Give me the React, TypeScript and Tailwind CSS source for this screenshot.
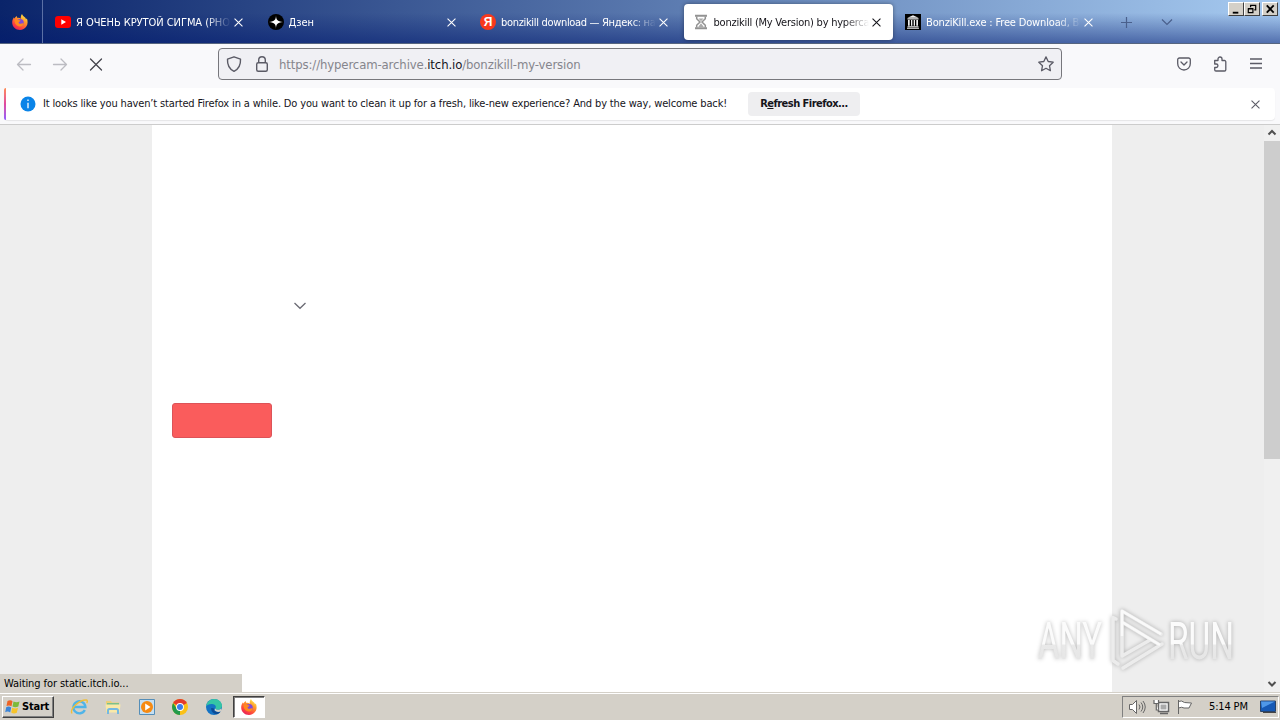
import type { ReactNode } from 'react'
import { clsx } from 'clsx'

function Cross({ size = 10, className }: { size?: number; className?: string }) {
  return (
    <svg width={size} height={size} viewBox="0 0 10 10" className={className} fill="none" stroke="currentColor" strokeWidth={1.2}>
      <path d="M.6.6l8.8 8.8M9.4.6L.6 9.4" />
    </svg>
  )
}

function Firefox({ size = 16 }: { size?: number }) {
  return (
    <svg width={size} height={size} viewBox="0 0 16 16">
      <defs>
        <linearGradient id="fx" x1="0.8" y1="0" x2="0.2" y2="1">
          <stop offset="0" stopColor="#fff44f" />
          <stop offset=".35" stopColor="#ff9a2a" />
          <stop offset=".7" stopColor="#ff4a3c" />
          <stop offset="1" stopColor="#e3195c" />
        </linearGradient>
      </defs>
      <path d="M10 0c.3 1.6 2 2.4 3 3.6.5.2.8.9.9 1.6.5-.1.8-.5.9-1 1.1 2.6 1.2 6-.5 8.4C12.800 15 10.500 16 8 16 3.600 16 .2 12.700.2 8.500.2 6.500.8 4.600 2 3.200c0 .6.2 1 .5 1.300C3 3.300 4 2.300 5 1.900c-.2.700 0 1.500.5 2 1.300-.3 2.500 0 3.300.8C8.500 3 9 1.200 10 0z" fill="url(#fx)" />
      <circle cx="8.200" cy="8.400" r="3.500" fill="#8049d8" />
      <path d="M2.600 5.800c1.400-1 3-.6 4 .2l2 .4c-.2 1-1.400 1-1.900 1.500-.3.900.5 2 1.800 1.900 1.300 0 2-.8 3.200-.3-.5 2-2 3-4 2.900C4.500 12.200 2.200 9.500 2.600 5.800z" fill="#ff8a1e" />
    </svg>
  )
}

function YouTube() {
  return (
    <svg width="16" height="16" viewBox="0 0 16 16">
      <rect x="0" y="2" width="16" height="12" rx="3" fill="#f00" />
      <path d="M6.300 5.300v5.400L11 8z" fill="#fff" />
    </svg>
  )
}

function Zen() {
  return (
    <svg width="16" height="16" viewBox="0 0 16 16">
      <circle cx="8" cy="8" r="8" fill="#000" />
      <path d="M8 1c.1 4.800 1.200 6.500 7 7-5.800.5-6.900 2.200-7 7-.1-4.800-1.200-6.500-7-7 5.800-.5 6.900-2.200 7-7z" fill="#fff" />
    </svg>
  )
}

function Yandex() {
  return (
    <span className="flex h-4 w-4 items-center justify-center rounded-full bg-[#f8381c] font-['Liberation_Sans',sans-serif] text-[12px] leading-none font-bold text-white">
      Я
    </span>
  )
}

function Hourglass() {
  return (
    <svg width="16" height="16" viewBox="0 0 16 16" fill="none" stroke="#929292">
      <path d="M2 1.700h12M2 14.300h12" strokeWidth="2" />
      <path d="M3.700 2.500v2.300L7 8l-3.300 3.200v2.300M12.300 2.500v2.300L9 8l3.300 3.200v2.300" strokeWidth="1.500" />
      <path d="M5.500 4.500h5L8 7.300zM8 9.300l3 4H5z" fill="#aaa" stroke="none" />
    </svg>
  )
}

function Archive() {
  return (
    <svg width="16" height="16" viewBox="0 0 16 16">
      <path d="M0 0h16v16H0z" fill="#000" />
      <path d="M8 1.300l5.500 2.400H2.500zM2.500 4.300h11v1.200h-11zM2.500 12.200h11v1h-11zM2 13.800h12v1H2zM3 6h1.700v5.800H3zM6 6h1.300v5.800H6zM8.700 6H10v5.800H8.700zM11.300 6H13v5.800h-1.700z" fill="#eee" />
    </svg>
  )
}

const TABS: { title: string; icon: ReactNode; active?: boolean; cls: string }[] = [
  { title: 'Я ОЧЕНЬ КРУТОЙ СИГМА (PHO', icon: <YouTube />, cls: 'tracking-[-0.06px]' },
  { title: 'Дзен', icon: <Zen />, cls: '' },
  { title: 'bonzikill download — Яндекс: на', icon: <Yandex />, cls: 'tracking-[-0.32px]' },
  { title: 'bonzikill (My Version) by hyperca', icon: <Hourglass />, active: true, cls: 'tracking-[-0.23px]' },
  { title: 'BonziKill.exe : Free Download, B', icon: <Archive />, cls: 'tracking-[-0.16px]' },
]

function TabStrip() {
  return (
    <div className="flex h-11 border-b border-[#56657f] bg-[linear-gradient(to_bottom,transparent_30%,rgba(0,24,110,0.5)),linear-gradient(to_right,#0a246a,#a6caf0)]">
      <div className="flex w-[43px] shrink-0 items-center border-r border-[#5b70a5] pl-3">
        <Firefox />
      </div>
      <div className="flex pl-[3px]">
        {TABS.map((t) => (
          <div key={t.title} className="w-[212.500px] shrink-0 pt-1 pr-[3px]">
            <div
              className={clsx(
                'flex h-9 items-center rounded-[4px] pl-[9px]',
                t.active ? 'bg-white text-[#15141a] shadow-[0_0_4px_rgba(0,0,0,0.4)]' : 'text-white'
              )}
            >
              {t.icon}
              <span
                className={clsx(
                  'ml-[5px] w-[155px] pt-0.5 text-[11px] whitespace-nowrap [mask-image:linear-gradient(to_right,black_130px,transparent)]',
                  t.cls
                )}
              >
                {t.title}
              </span>
              <Cross size={9} className="ml-[3px] shrink-0" />
            </div>
          </div>
        ))}
      </div>
      <svg width="56" height="14" viewBox="0 0 56 14" className="mt-4 ml-[11px] text-[#4a608c]" fill="none" stroke="currentColor" strokeWidth="1.200">
        <path d="M6.500 1v11M1 6.500h11M42 3.500l5 5 5-5" />
      </svg>
      <div className="mt-0.5 mr-0.5 ml-auto flex h-[14px]">
        <WinButton><path d="M4 10.500h6" strokeWidth="2" /></WinButton>
        <WinButton>
          <path d="M6 4.500V2.500h5.500v5H10M5.500 2.500h6.500" strokeWidth="1.300" />
          <path d="M3.500 6.500h5v4h-5zM3 6h6" strokeWidth="1.300" />
        </WinButton>
        <span className="w-0.5" />
        <WinButton><path d="M4 2.500l7.500 8M11.500 2.500l-7.500 8" strokeWidth="2" /></WinButton>
      </div>
    </div>
  )
}

function WinButton({ children }: { children: ReactNode }) {
  return (
    <span className="h-[14px] w-4 border border-t-white border-r-[#404040] border-b-[#404040] border-l-white bg-[#d4d0c8]">
      <svg width="14" height="12" viewBox="0 0 15 13" fill="none" stroke="#000">{children}</svg>
    </span>
  )
}

function Toolbar() {
  return (
    <div className="flex h-11 items-center bg-[#f9f9fb] pb-1 text-[#5b5b66]">
      <svg width="90" height="16" viewBox="0 0 90 16" className="ml-4" fill="none" stroke="currentColor" strokeWidth="1.300" strokeLinecap="round" strokeLinejoin="round">
        <path d="M14.500 8.500h-13M7 3L1.500 8.500 7 14M37.500 8.500h13M45 3l5.500 5.500L45 14" className="text-[#bcbcc2]" stroke="currentColor" />
        <path d="M74.500 3l11 11M85.500 3l-11 11" stroke="#44444c" />
      </svg>
      <div className="ml-28 flex h-8 w-[844px] shrink-0 items-center rounded-[4px] border border-[#77777c] bg-[#f0f0f4] px-[7px]">
        <svg width="44" height="18" viewBox="0 0 44 18" fill="none" stroke="currentColor" strokeWidth="1.400" strokeLinejoin="round">
          <path d="M8 1.800l6.500 2.400c.3 5.500-1.500 9.600-6.500 12.100C3 13.800 1.200 9.700 1.500 4.200z" />
          <rect x="30.700" y="7.700" width="10.600" height="8.600" rx="1.500" />
          <path d="M32.700 7.500V5a3.300 3.300 0 016.600 0v2.500" />
        </svg>
        <span className="ml-[9px] pt-px text-[13px] tracking-[-0.12px] whitespace-nowrap text-[#85858c]">
          https://hypercam-archive.<span className="text-[#15141a]">itch.io</span>/bonzikill-my-version
        </span>
        <svg width="16" height="16" viewBox="0 0 16 16" className="ml-auto" fill="none" stroke="currentColor" strokeWidth="1.300" strokeLinejoin="round">
          <path d="M8 .9l2.200 4.600 5 .7-3.700 3.500.9 5L8 12.300l-4.400 2.400.9-5L.8 6.200l5-.7z" />
        </svg>
      </div>
      <svg width="88" height="18" viewBox="0 0 88 18" className="ml-[114px]" fill="none" stroke="currentColor" strokeWidth="1.300" strokeLinecap="round" strokeLinejoin="round">
        <path d="M3.500 3h9A1.700 1.700 0 0114.300 4.700V8.500A6.300 6.300 0 018 15 6.300 6.300 0 011.700 8.500V4.700A1.700 1.700 0 013.500 3zM5 7l3 3 3-3" />
        <path d="M38.700 5.500H42V4a2 2 0 014 0v1.500h2.500a1.300 1.300 0 011.300 1.300v7.900a1.300 1.300 0 01-1.300 1.300h-8.500a1.300 1.300 0 01-1.300-1.300V12.500h1.500a1.700 1.700 0 000-3.500h-1.500z" />
        <path d="M74 4h12M74 8.500h12M74 13h12" strokeLinecap="butt" />
      </svg>
    </div>
  )
}

function Notification() {
  return (
    <div className="h-[37px] border-b border-[#cccccc] bg-[#f9f9fb] pr-[5px] pl-1">
      <div className="flex h-8 items-center rounded-[4px] bg-white shadow-[0_1px_1px_rgba(0,0,0,0.08)]">
        <span className="h-full w-0.5 rounded-l bg-gradient-to-b from-[#ff8a50] via-[#e0479e] to-[#9059ff]" />
        <svg width="16" height="16" viewBox="0 0 16 16" className="ml-[14px]">
          <circle cx="8" cy="8" r="7.500" fill="#0a84e8" />
          <path d="M8 6.700v5.600M8 3.500v1.600" stroke="#fff" strokeWidth="1.300" />
        </svg>
        <span className="ml-[7px] w-[705px] text-[11px] tracking-[-0.148px] whitespace-nowrap text-[#15141a]">
          It looks like you haven’t started Firefox in a while. Do you want to clean it up for a fresh, like-new experience? And by the way, welcome back!
        </span>
        <button className="h-6 w-28 shrink-0 rounded-[4px] bg-[#eeeef0] pt-px text-[11px] font-bold tracking-[-0.53px] whitespace-nowrap text-[#15141a]">
          R<u>e</u>fresh Firefox...
        </button>
        <Cross size={9} className="mr-[15px] ml-auto text-[#5b5b66]" />
      </div>
    </div>
  )
}

function Watermark() {
  return (
    <svg width="204" height="70" viewBox="0 0 204 70" className="absolute top-[480px] left-[1034px] drop-shadow-[0_0_2px_rgba(0,0,0,0.28)]">
      <defs>
        <linearGradient id="wm" x1="0" y1="0" x2="0" y2="1">
          <stop offset=".54" stopColor="#fbfbfb" />
          <stop offset=".56" stopColor="#e9e9e9" />
          <stop offset="1" stopColor="#e3e3e3" />
        </linearGradient>
      </defs>
      <g fill="url(#wm)" fontFamily="Roboto, sans-serif" fontWeight="400" fontSize="52">
        <text x="4" y="54" textLength="64" lengthAdjust="spacingAndGlyphs">ANY</text>
        <text x="134" y="54" textLength="66" lengthAdjust="spacingAndGlyphs">RUN</text>
      </g>
      <g fill="none" stroke="#ececec" strokeWidth="3.500" strokeLinejoin="round" strokeLinecap="round">
        <path d="M82 14l-3-1.500v43l5 3.500" />
        <path d="M88 50V6l39 23M88 17l38 23M88 51l28-16M89 63l39-24" />
      </g>
      <path d="M88 31V6l39 23M88 17l38 23" fill="none" stroke="#fafafa" strokeWidth="2.500" strokeLinejoin="round" />
    </svg>
  )
}

function Page() {
  return (
    <div className="relative flex h-[567px] bg-[#eeeeee]">
      <main className="ml-[152px] w-[960px] bg-white px-5 pt-[174px]">
        <svg width="14" height="14" viewBox="0 0 14 14" className="ml-[121px]" fill="none" stroke="#6b6b74" strokeWidth="1.300">
          <path d="M1.500 4L7 9.300 12.500 4" />
        </svg>
        <div className="mt-[90px] h-[35px] w-[100px] rounded-[3px] border border-[#dc5358] bg-[#fa5c5c]" />
      </main>
      <div className="ml-auto flex w-4 flex-col items-center bg-[#f0f0f0] text-[#505050]">
        <svg width="16" height="16" viewBox="0 0 16 16" fill="none" stroke="currentColor" strokeWidth="2">
          <path d="M4.500 9.500L8 6l3.500 3.500" />
        </svg>
        <div className="h-[318px] w-full bg-[#cdcdcd]" />
        <svg width="16" height="16" viewBox="0 0 16 16" className="mt-auto" fill="none" stroke="currentColor" strokeWidth="2">
          <path d="M4.500 6L8 9.500 11.500 6" />
        </svg>
      </div>
      <div className="absolute bottom-0 left-0 flex h-[18px] w-[242px] items-center bg-[#d4d0c8] pt-[3px] pl-1 text-[11px] tracking-[-0.08px] text-black">
        Waiting for static.itch.io...
      </div>
      <Watermark />
    </div>
  )
}

function Explorer() {
  return (
    <svg width="18" height="18" viewBox="0 0 18 18" fill="none">
      <path d="M14.800 12a6 6 0 11.600-3H4" stroke="#4fb4e8" strokeWidth="2.400" />
      <path d="M2 15.500C-.5 11.500 9 1.500 16.500 2c1 .2 1 1.800.2 3" stroke="#f0be38" strokeWidth="1.400" />
    </svg>
  )
}

function Folder() {
  return (
    <svg width="18" height="18" viewBox="0 0 18 18">
      <path d="M2 3h5l1 1.500h7V14H2z" fill="#ecd078" />
      <path d="M3 5h12v2H3z" fill="#7cc08a" />
      <path d="M1.500 6.500h15l-1 8h-13z" fill="#f9e9a8" />
      <path d="M4 16v-3.500q0-1.500 1.500-1.500h7q1.500 0 1.500 1.500V16" fill="none" stroke="#74b9e2" strokeWidth="2" />
    </svg>
  )
}

function Player() {
  return (
    <svg width="18" height="18" viewBox="0 0 18 18">
      <path d="M1.500 1.500h15v15h-15z" fill="#c5dff2" stroke="#558eb8" />
      <circle cx="9" cy="9" r="6" fill="#f68a12" />
      <path d="M7.200 5.500v7L12.500 9z" fill="#fff" />
    </svg>
  )
}

function Chrome() {
  return (
    <svg width="16" height="16" viewBox="0 0 16 16">
      <circle cx="8" cy="8" r="8" fill="#fbc116" />
      <path d="M8 8L1.100 4a8 8 0 0113.800 0z" fill="#e33b2e" />
      <path d="M8 8L8 16A8 8 0 011.100 4L5 10z" fill="#229a4b" />
      <circle cx="8" cy="8" r="3.900" fill="#fff" />
      <circle cx="8" cy="8" r="3" fill="#3b7ded" />
    </svg>
  )
}

function Edge() {
  return (
    <svg width="16" height="16" viewBox="0 0 16 16">
      <circle cx="8" cy="8" r="8" fill="#1473c4" />
      <path d="M.1 7.500C.8 3 4 0 8.200 0 13 0 16 3.500 16 6.800c0 2.400-1.700 3.900-4 3.900-1.700 0-2.800-.7-2.500-1.500.7-1 .5-3.500-2.300-4C4 4.700 1 5.600.1 7.500z" fill="#35c5a5" />
      <path d="M5.200 9c-.3 3 2 6.500 6 6 1.500-.4 2.700-1.400 3.500-2.600-2 .9-6.700.9-7-3.200z" fill="#0c4b96" />
      <path d="M9.500 9.200c-.3.800.8 1.500 2.500 1.500 1.300 0 2.500-.5 3.200-1.300l.8 2.600-1.200.4c-2.500 1-5.500.4-6.300-1.300z" fill="#d4d0c8" />
    </svg>
  )
}

function Taskbar() {
  return (
    <div className="h-7 border-t border-[#d4d0c8] bg-[#d4d0c8]">
      <div className="flex h-[27px] items-center border-t border-white px-0.5">
        <button className="flex h-[22px] w-[52px] items-center border border-t-white border-r-[#404040] border-b-[#404040] border-l-white pl-px text-[11px] font-bold tracking-[-0.2px] text-black shadow-[inset_-1px_-1px_#808080]">
          <svg width="17" height="16" viewBox="0 0 16 16" className="mr-px shrink-0">
            <path d="M3 2q3-1.500 5 .2L7 7.300q-2.500-1.700-5-.2z" fill="#ed6325" />
            <path d="M9 2.500q3 1.500 6 0l-1.200 5q-3 1.500-5.800 0z" fill="#7cba3b" />
            <path d="M1.700 8.300q2.500-1.500 5 .2l-1 5q-2.500-1.700-5-.2z" fill="#3b85d8" />
            <path d="M7.700 8.800q3 1.500 5.800 0l-1.200 5q-3 1.500-5.600-.2z" fill="#f7c42a" />
          </svg>
          <span className="pt-px">Start</span>
        </button>
        <div className="ml-4 flex items-center gap-4">
          <Explorer />
          <Folder />
          <Player />
          <Chrome />
          <span className="ml-0.5"><Edge /></span>
        </div>
        <div className="ml-[11px] flex h-[22px] w-8 items-center justify-center border border-t-[#404040] border-r-white border-b-white border-l-[#404040] bg-white shadow-[inset_1px_1px_#808080]">
          <Firefox />
        </div>
        <div className="-mr-px ml-auto flex h-[22px] w-[157px] items-center border border-t-[#808080] border-r-white border-b-white border-l-[#808080] pl-1.5">
          <svg width="64" height="16" viewBox="0 0 64 16" fill="#fff" stroke="#666">
            <path d="M.5 5.500h3l4-4v13l-4-4h-3z" />
            <path d="M10 5.500q2 2.500 0 5M12 3.500q3.500 4.500 0 9M14 2q4.500 6 0 12" fill="none" />
            <path d="M29.500 3.500h10v9h-10zM31 14.500h8" strokeWidth="1.500" />
            <path d="M31.500 5.500h6v5h-6z" fill="#aaa" stroke="none" />
            <path d="M25 1v3.500h4.500V1M27.300 4.500V11h2" strokeWidth="1.200" />
            <path d="M49.500 1v14M49.500 2.500q3-1.500 6 1l7 .5-2.500 5h-5q-2-1.500-5.500 0z" />
          </svg>
          <span className="ml-4 pt-px text-[11px] tracking-[-0.15px] whitespace-nowrap text-black">5:14 PM</span>
          <svg width="16" height="14" viewBox="0 0 16 14" className="mr-0.5 ml-auto shrink-0">
            <path d="M.5 1h15v10.500H.5z" fill="#1659b5" stroke="#294368" />
            <path d="M1 1.500h14L2 8z" fill="#4f98e8" />
            <path d="M3 12.500h13" stroke="#444" />
          </svg>
        </div>
      </div>
    </div>
  )
}

export default function App() {
  return (
    <div className="flex h-[720px] w-[1280px] flex-col overflow-hidden font-['DejaVu_Sans_Condensed','DejaVu_Sans',sans-serif]">
      <TabStrip />
      <Toolbar />
      <Notification />
      <Page />
      <Taskbar />
    </div>
  )
}
